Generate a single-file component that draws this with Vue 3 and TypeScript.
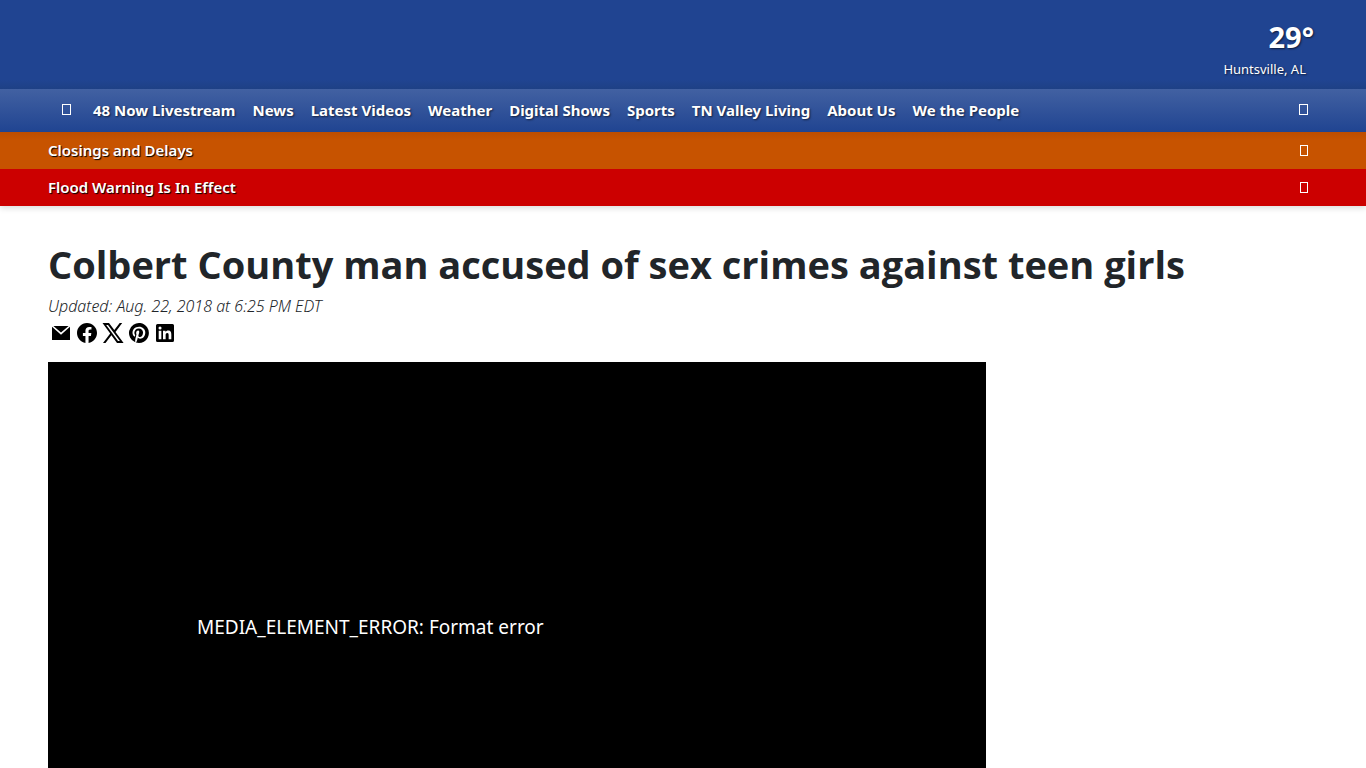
<script setup lang="ts">
interface NavItem {
  label: string
}

interface AlertItem {
  label: string
  tone: 'closings' | 'flood'
}

interface ShareLink {
  label: string
  path: string
}

const navItems: NavItem[] = [
  { label: '48 Now Livestream' },
  { label: 'News' },
  { label: 'Latest Videos' },
  { label: 'Weather' },
  { label: 'Digital Shows' },
  { label: 'Sports' },
  { label: 'TN Valley Living' },
  { label: 'About Us' },
  { label: 'We the People' },
]

const alerts: AlertItem[] = [
  { label: 'Closings and Delays', tone: 'closings' },
  { label: 'Flood Warning Is In Effect', tone: 'flood' },
]

const shareLinks: ShareLink[] = [
  {
    label: 'Email',
    path: 'M4.4 5h15.2L12 11.6zM3 5.8l9 7.900 9-7.900V19H3z',
  },
  {
    label: 'Facebook',
    path: 'M12 2C6.48 2 2 6.48 2 12c0 4.99 3.66 9.13 8.44 9.88v-6.99H7.9V12h2.54V9.8c0-2.51 1.49-3.89 3.78-3.89 1.09 0 2.24.19 2.24.19v2.46H15.2c-1.24 0-1.63.77-1.63 1.56V12h2.77l-.44 2.89h-2.33v6.99C18.34 21.13 22 16.99 22 12c0-5.52-4.48-10-10-10z',
  },
  {
    label: 'X',
    path: 'M8 2H1.5l7.7 10.6L2 22h2.5l5.9-7.7L16 22h6.6l-8.1-11.1L21.2 2h-2.5l-5.4 7.1L8 2zm9 18L5.2 4H7l11.9 16H17z',
  },
  {
    label: 'Pinterest',
    path: 'M13.37 2.09A10 10 0 0 0 8.27 21.28c-.09-.79-.17-2 .03-2.86.18-.78 1.17-4.97 1.17-4.97s-.3-.6-.3-1.48c0-1.39.81-2.43 1.81-2.43.86 0 1.27.64 1.27 1.41 0 .86-.55 2.14-.83 3.33-.24 1 .5 1.81 1.48 1.81 1.78 0 3.14-1.88 3.14-4.58 0-2.39-1.72-4.07-4.18-4.07-2.85 0-4.52 2.14-4.52 4.34 0 .86.33 1.78.75 2.29.08.1.09.19.07.29-.08.31-.25 1-.28 1.13-.04.18-.15.22-.34.13-1.25-.58-2.03-2.41-2.03-3.88 0-3.15 2.29-6.05 6.61-6.05 3.46 0 6.16 2.47 6.16 5.77 0 3.45-2.17 6.22-5.18 6.22-1.02 0-1.97-.53-2.29-1.15l-.63 2.38c-.22.87-.83 1.96-1.24 2.63A10 10 0 1 0 13.37 2.09z',
  },
  {
    label: 'LinkedIn',
    path: 'M4.5 3h15A1.5 1.5 0 0 1 21 4.5v15a1.5 1.5 0 0 1-1.5 1.5h-15A1.5 1.5 0 0 1 3 19.5v-15A1.5 1.5 0 0 1 4.5 3zM5.7 9.75v8.6h2.65v-8.6zM7.03 5.5a1.54 1.54 0 1 0 0 3.08 1.54 1.54 0 0 0 0-3.08zM10 9.75v8.6h2.65v-4.25c0-1.12.21-2.2 1.6-2.2s1.4 1.28 1.4 2.28v4.17h2.67v-4.72c0-2.32-.5-4.09-3.2-4.09-1.3 0-2.17.71-2.53 1.39h-.04V9.75z',
  },
]
</script>

<template>
  <div class="page">
    <header class="site-header">
      <div class="masthead">
        <a class="weather" href="#">
          <span class="temperature">29°</span>
          <span class="city">Huntsville, AL</span>
        </a>
      </div>

      <nav class="main-nav" aria-label="Main">
        <a class="home" href="#" aria-label="Home"><span class="glyph"></span></a>
        <ul class="nav-list">
          <li v-for="item in navItems" :key="item.label">
            <a href="#">{{ item.label }}</a>
          </li>
        </ul>
        <button class="search" type="button" aria-label="Search"><span class="glyph"></span></button>
      </nav>

      <a
        v-for="alert in alerts"
        :key="alert.label"
        class="alert"
        :class="alert.tone"
        href="#"
      >
        <span class="alert-text">{{ alert.label }}</span>
        <span class="glyph small"></span>
      </a>
    </header>

    <main class="article">
      <h1>Colbert County man accused of sex crimes against teen girls</h1>
      <p class="updated">Updated: Aug. 22, 2018 at 6:25 PM EDT</p>
      <div class="share">
        <a v-for="link in shareLinks" :key="link.label" href="#" :aria-label="link.label">
          <svg viewBox="0 0 24 24" aria-hidden="true">
            <path :d="link.path" fill-rule="evenodd" />
          </svg>
        </a>
      </div>
      <div class="columns">
        <section class="player" aria-label="Video player">
          <p>MEDIA_ELEMENT_ERROR: Format error</p>
        </section>
      </div>
    </main>
  </div>
</template>

<style>
body {
  margin: 0;
  background: #fff;
}

html {
  overflow: hidden;
}
</style>

<style scoped>
.page {
  font-family: "Noto Sans", "Open Sans", sans-serif;
  font-size: 15px;
  line-height: 24px;
  color: #212529;
}

a {
  color: inherit;
  text-decoration: none;
}

.site-header {
  color: #fff;
  background: #204491;
  box-shadow: 0 2px 6px rgba(0, 0, 0, 0.15);
}

.masthead {
  display: flex;
  justify-content: flex-end;
  box-sizing: border-box;
  height: 89px;
  padding: 16px 52px 0 48px;
  background: linear-gradient(#204491 80px, #1e4085);
}

.weather {
  display: flex;
  flex-direction: column;
  align-items: flex-end;
  text-shadow: 1px 1px 2px rgba(0, 0, 0, 0.6);
}

.temperature {
  font-size: 29px;
  font-weight: 700;
  line-height: 42px;
}

.city {
  margin-right: 8px;
  font-size: 13px;
  line-height: 22px;
}

.main-nav {
  display: flex;
  align-items: center;
  box-sizing: border-box;
  height: 43px;
  padding: 0 58px 2px 62px;
  background: linear-gradient(#4261a2, #204491);
  font-weight: 700;
  text-shadow: 1px 1px 2px rgba(0, 0, 0, 0.6);
}

.home {
  display: flex;
  margin-right: 22px;
}

.nav-list {
  display: flex;
  flex: 1;
  gap: 17px;
  margin: 0;
  padding: 0;
  list-style: none;
  white-space: nowrap;
}

.search {
  display: flex;
  padding: 0;
  border: 0;
  background: none;
  color: inherit;
}

.glyph {
  box-sizing: border-box;
  width: 9px;
  height: 11px;
  border: 1px solid currentColor;
}

.glyph.small {
  width: 8px;
}

.alert {
  display: flex;
  align-items: center;
  justify-content: space-between;
  height: 37px;
  padding: 0 58px 0 48px;
  font-weight: 600;
  text-shadow: 1px 1px 1px #000;
}

.alert-text {
  padding-bottom: 2px;
}

.closings {
  background: linear-gradient(#bd4d00, #c75300 8px);
}

.flood {
  background: #c00;
}

.article {
  padding: 34px 48px 0;
}

h1 {
  margin: 0;
  font-family: "Open Sans", "Noto Sans", sans-serif;
  font-size: 38px;
  font-weight: 700;
  line-height: 48px;
}

.updated {
  margin: 6px 0 0;
  font-size: 16px;
  font-style: italic;
  font-weight: 300;
}

.share {
  display: flex;
  gap: 2px;
  margin-bottom: 17px;
  padding: 3px 1px 0;
}

.share a {
  display: flex;
  color: #000;
}

.share svg {
  width: 24px;
  height: 24px;
  fill: currentColor;
}

.columns {
  display: grid;
  grid-template-columns: minmax(0, 1fr) 300px;
  gap: 32px;
}

.player {
  display: flex;
  align-items: center;
  box-sizing: border-box;
  aspect-ratio: 16 / 9;
  padding: 2px 149px 0;
  background: #000;
  color: #fff;
}

.player p {
  margin: 0;
  font-size: 19px;
  line-height: 28px;
}
</style>
